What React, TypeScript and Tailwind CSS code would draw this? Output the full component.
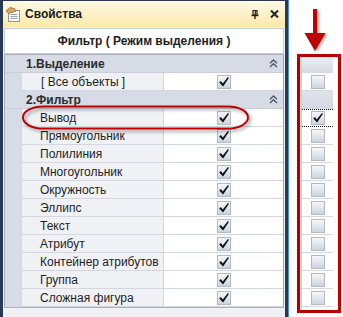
import React from "react";

const items = [
  "Вывод",
  "Прямоугольник",
  "Полилиния",
  "Многоугольник",
  "Окружность",
  "Эллипс",
  "Текст",
  "Атрибут",
  "Контейнер атрибутов",
  "Группа",
  "Сложная фигура",
];

function Check() {
  return (
    <svg width="12" height="12" viewBox="0 0 12 12">
      <path d="M1.2 6.4 L2.9 5 L4.8 7.4 L9.9 0.9 L11 1.8 L5.1 10.6 Z" fill="#111" />
    </svg>
  );
}

function Box({ checked }: { checked?: boolean }) {
  return (
    <div className="w-[14px] h-[14px] border border-[#b4bac5] bg-linear-to-b from-[#f6f7fa] to-[#cdd4df] flex items-center justify-center">
      {checked && <Check />}
    </div>
  );
}

function Chevrons() {
  return (
    <svg width="9" height="9" viewBox="0 0 9 9" fill="none" stroke="#4b5a6e" strokeWidth="1.4">
      <path d="M1 4.3 L4.5 1 L8 4.3" />
      <path d="M1 8 L4.5 4.7 L8 8" />
    </svg>
  );
}

function Category({ title }: { title: string }) {
  return (
    <div className="flex items-center h-[18px] bg-[#d6dbe5] border-b border-[#c9ced8] pl-[21px] pr-[5px]">
      <span className="flex-1 font-bold text-[#2b2b2b]">{title}</span>
      <Chevrons />
    </div>
  );
}

function Row({ label }: { label: string }) {
  return (
    <div className="flex h-[18px]">
      <div className="w-[16px] bg-[#d6dbe5]" />
      <div className="w-[142px] border-l border-b border-[#d3d7df] bg-[#f0f1f5] pl-[18px] flex items-center text-[#1e1e1e]">
        {label}
      </div>
      <div className="flex-1 border-l border-b border-[#d3d7df] bg-white flex items-center justify-center">
        <Box checked />
      </div>
    </div>
  );
}

export default function App() {
  return (
    <div className="relative w-[343px] h-[317px] bg-white flex overflow-hidden font-['Liberation_Sans',Arial,sans-serif] text-[12px] leading-none">
      {/* property panel */}
      <div className="w-[289px] h-full bg-[#293955] pl-[3px] pr-[3px] pt-[1px] border-r border-[#4d90d8]">
        <div className="h-full flex flex-col">
          <div className="h-[26px] flex items-center bg-linear-to-b from-[#fffae6] to-[#fde8a8] pl-[2px] pr-[4px]">
            <svg width="17" height="17" viewBox="0 0 17 17">
              <rect x="3.5" y="4.5" width="11" height="11" fill="#fff" stroke="#8b95a6" />
              <path d="M5.5 8.5h7M5.5 10.5h7M5.5 12.5h7" stroke="#9aa3b2" />
              <path d="M1 5 L5 1.5 L9.5 2.5 L11 5 L7 6.5 L3.5 7.5 Z" fill="#d9a467" stroke="#9c6a34" strokeWidth="0.8" />
            </svg>
            <span className="ml-[3px] flex-1 font-bold text-[12px] text-[#1b1b1b]">Свойства</span>
            <svg width="8" height="9" viewBox="0 0 8 9" className="mr-[11px]">
              <path d="M2 0.5h4v4.5h-4z" fill="none" stroke="#222" strokeWidth="1.2" />
              <path d="M4.3 0.5v4.5" stroke="#222" strokeWidth="1.2" />
              <path d="M0.5 5.5h7" stroke="#222" strokeWidth="1.4" />
              <path d="M4 5.5v3.5" stroke="#222" strokeWidth="1.4" />
            </svg>
            <svg width="9" height="8" viewBox="0 0 9 8" className="mr-[2px]">
              <path d="M1 0.5 L8 7.5 M8 0.5 L1 7.5" stroke="#222" strokeWidth="2" />
            </svg>
          </div>
          <div className="flex-1 bg-[#eff1f5] px-[1px] pt-[1px]">
            <div className="h-[26px] bg-white border border-[#c7ccd6] flex items-center justify-center font-bold text-[#1e1e1e]">
              Фильтр ( Режим выделения )
            </div>
            <div className="border border-t-[#a9b1bf] border-[#a9b1bf] border-r-[#9ba3b3]">
              <Category title="1.Выделение" />
              <div className="flex h-[18px]">
                <div className="w-[16px] bg-[#d6dbe5]" />
                <div className="w-[142px] border-l border-b border-[#d3d7df] bg-[#f0f1f5] pl-[19px] flex items-center text-[#1e1e1e]">
                  [ Все объекты ]
                </div>
                <div className="flex-1 border-l border-b border-[#d3d7df] bg-white flex items-center justify-center">
                  <Box checked />
                </div>
              </div>
              <Category title="2.Фильтр" />
              {items.map((it) => (
                <Row key={it} label={it} />
              ))}
            </div>
          </div>
        </div>
      </div>

      {/* highlighted column */}
      <div className="ml-[8px] flex flex-col">
        <svg width="44" height="54" viewBox="0 0 44 54">
          <defs>
            <filter id="sh" x="-50%" y="-50%" width="200%" height="200%">
              <feGaussianBlur stdDeviation="1.5" />
            </filter>
          </defs>
          <path d="M18 11h4v23h8.5l-10.5 18l-10.5-18h8.5z" fill="rgba(0,0,0,0.35)" filter="url(#sh)" />
          <path d="M16 9h4v24h8.5l-10.5 18l-10.5-18h8.5z" fill="#c00000" />
        </svg>
        <div className="w-[44px] h-[259px] border-[3px] border-[#c00000] pl-[2px]">
          <div className="w-[31px] h-full flex flex-col shadow-[-3px_0_4px_rgba(0,0,0,0.22)] bg-white">
            <div className="h-[16px] bg-linear-to-b from-[#eceff4] to-[#d3d8e2]" />
            <div className="h-[18px] border-b border-[#d6d9e0] flex items-center justify-center">
              <Box />
            </div>
            <div className="h-[18px] bg-linear-to-b from-[#dfe3ea] to-[#d3d8e2]" />
            {items.map((it, i) => (
              <div
                key={it}
                className={
                  i === 0
                    ? "h-[18px] border-y border-dotted border-[#111] flex items-center justify-center"
                    : "h-[18px] border-b border-[#d6d9e0] flex items-center justify-center"
                }
              >
                <Box checked={i === 0} />
              </div>
            ))}
          </div>
        </div>
      </div>

      {/* red ring around the first filter row */}
      <svg className="absolute left-[19px] top-[103px]" width="236" height="32" viewBox="0 0 236 32">
        <defs>
          <filter id="ring" x="-10%" y="-50%" width="120%" height="200%">
            <feGaussianBlur stdDeviation="1.6" />
          </filter>
        </defs>
        <rect x="6" y="6" width="225" height="22" rx="20" ry="11" fill="none" stroke="rgba(0,0,0,0.3)" strokeWidth="2.5" filter="url(#ring)" />
        <rect x="4" y="3.5" width="225" height="22" rx="20" ry="11" fill="none" stroke="#c00000" strokeWidth="2" />
      </svg>
    </div>
  );
}
